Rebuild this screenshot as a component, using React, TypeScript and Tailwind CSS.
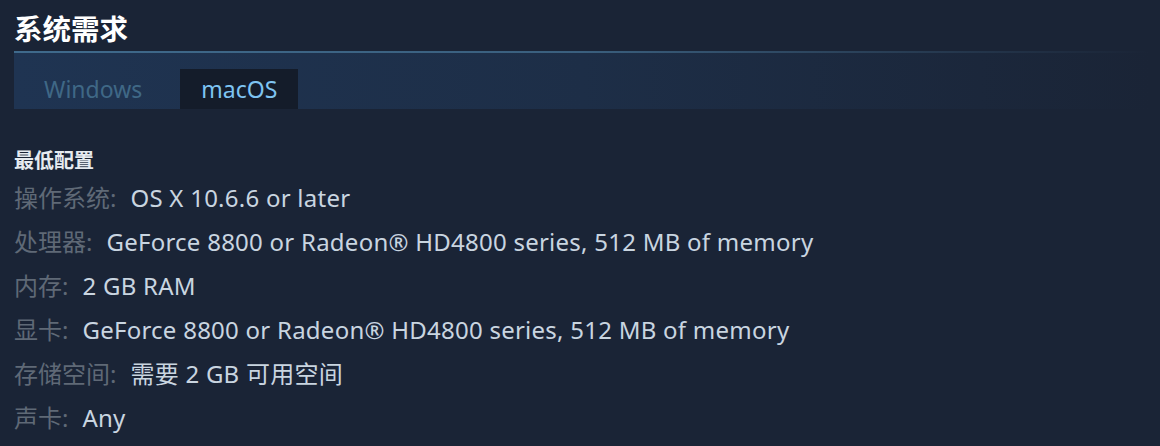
import React from "react";

const rows: [string, string][] = [
  ["操作系统:", "OS X 10.6.6 or later"],
  ["处理器:", "GeForce 8800 or Radeon® HD4800 series, 512 MB of memory"],
  ["内存:", "2 GB RAM"],
  ["显卡:", "GeForce 8800 or Radeon® HD4800 series, 512 MB of memory"],
  ["存储空间:", "需要 2 GB 可用空间"],
  ["声卡:", "Any"],
];

export default function App() {
  return (
    <div
      className="w-[1160px] h-[446px] overflow-hidden bg-[#1a2436] pl-[14px] pr-[10px]"
      style={{ fontFamily: '"Noto Sans", "Noto Sans CJK SC", sans-serif' }}
    >
      <div className="h-[51px] pt-[10px]">
        <h2 className="text-[28.5px] leading-[38px] font-bold text-white">系统需求</h2>
      </div>
      <div className="h-[2px] bg-gradient-to-r from-[#3f6a8c] via-[#3a5f7e] to-[#1a2436]" />
      <div className="h-[56px] flex items-end pl-[30px] bg-gradient-to-r from-[#1f3452] via-[#1d2e47] to-[#1a2436]">
        <div className="h-[40px] flex items-center text-[23px] text-[#3f6886] pr-[38px]">Windows</div>
        <div className="h-[40px] flex items-center px-[21px] bg-[#141c2a] text-[23px] text-[#7ec4f2]">macOS</div>
      </div>
      <div className="pt-[39px]">
        <div className="text-[20px] leading-[26px] font-bold text-[#e6ebf0]">最低配置</div>
        <div className="mt-[2px] flex flex-col">
          {rows.map(([k, v]) => (
            <div key={k} className="h-[44px] flex items-center text-[24px]">
              <span className="text-[#5f6976]">{k}</span>
              <span className="ml-[14px] text-[#c9d5e0] tracking-[0.25px]">{v}</span>
            </div>
          ))}
        </div>
      </div>
    </div>
  );
}
